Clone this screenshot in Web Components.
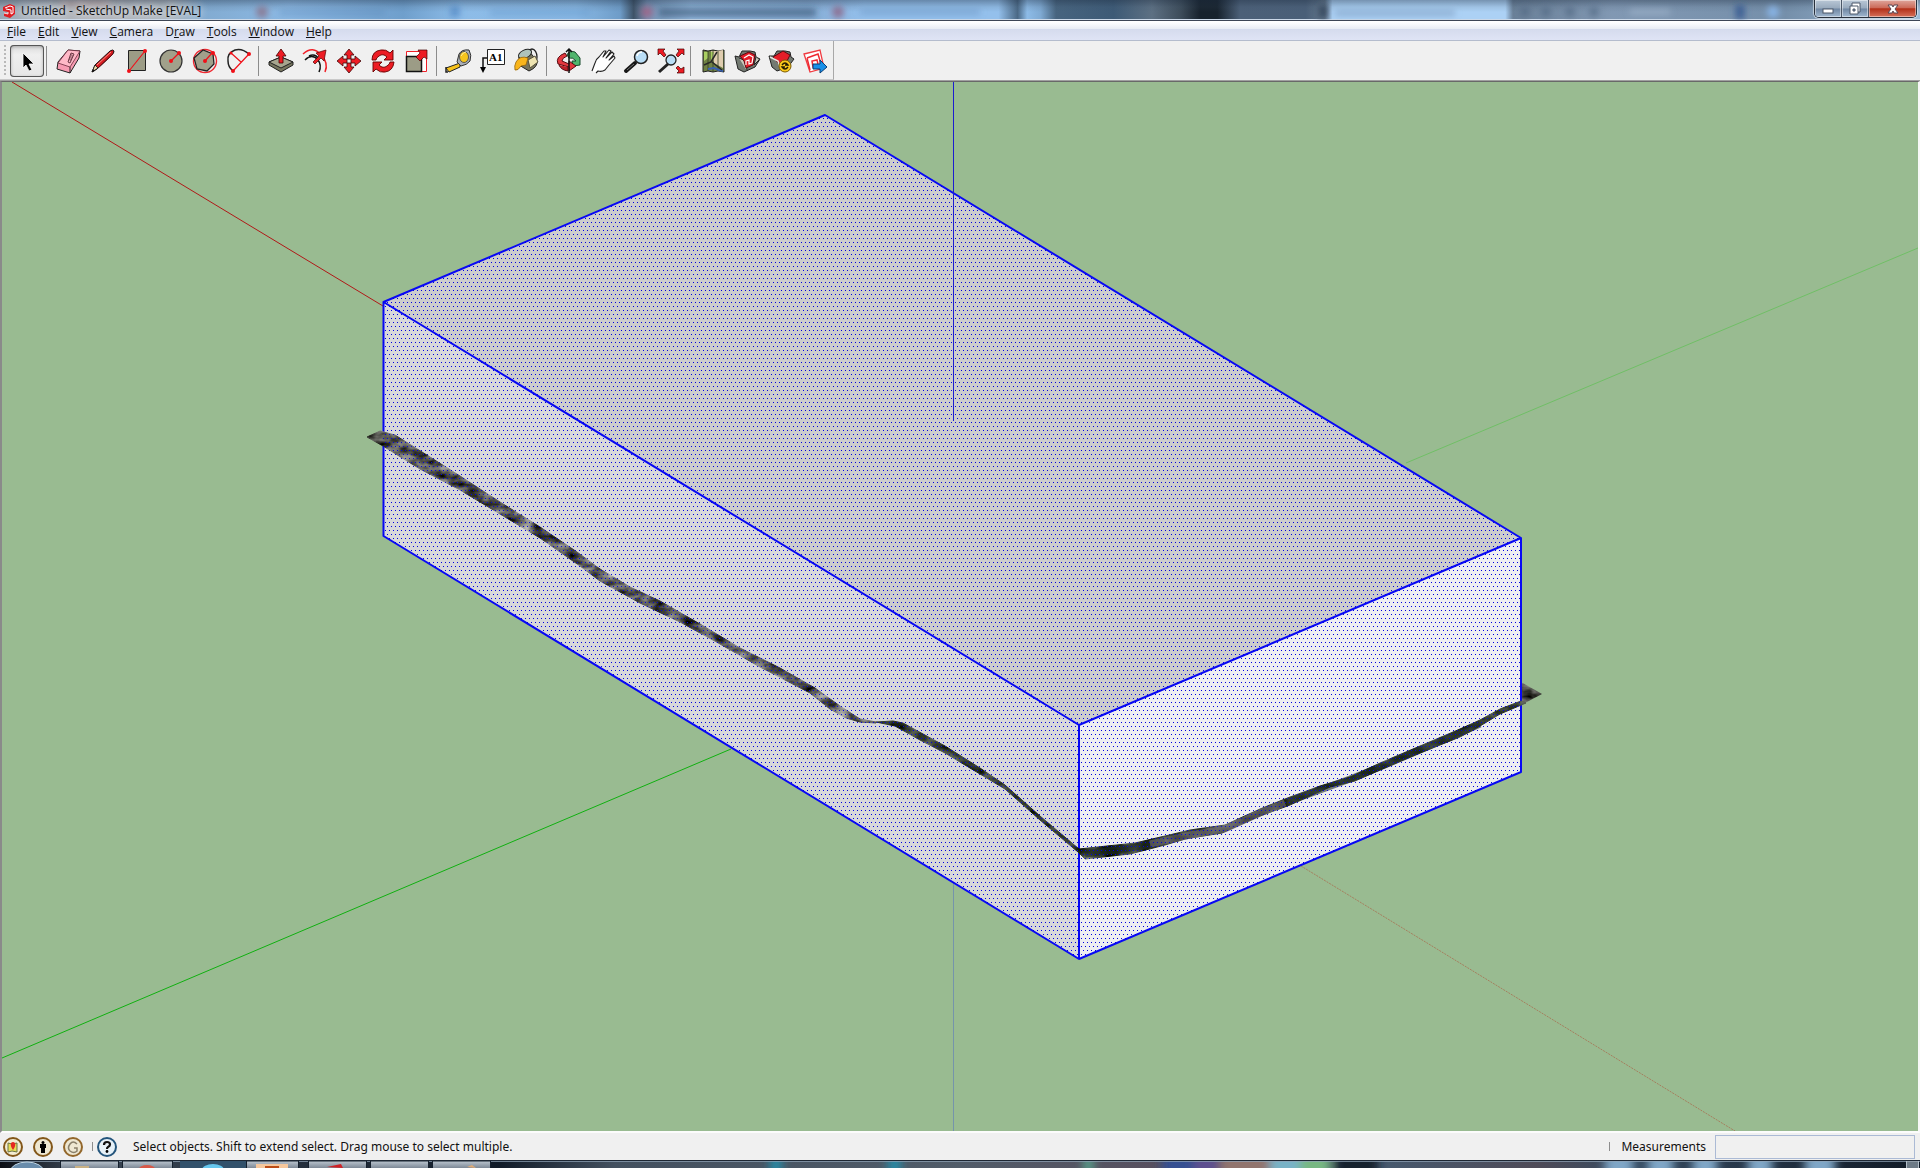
<!DOCTYPE html>
<html lang="en">
<head>
<meta charset="utf-8">
<title>Untitled - SketchUp Make [EVAL]</title>
<style>
html,body{height:100%;margin:0}
body{font-family:"Open Sans","Noto Sans",sans-serif;font-size:12px;color:#111;background:#f0f0f0;overflow:hidden}
</style>
</head>
<body>
<sketch-app></sketch-app>

<template id="t-app">
<style>
:host{display:flex;flex-direction:column;height:100vh}
model-view{flex:1;min-height:0}
</style>
<title-bar>Untitled - SketchUp Make [EVAL]</title-bar>
<menu-bar></menu-bar>
<tool-bar></tool-bar>
<model-view></model-view>
<status-bar>Select objects. Shift to extend select. Drag mouse to select multiple.</status-bar>
<task-strip></task-strip>
</template>

<template id="t-title">
<style>
:host{display:flex;position:relative;height:20px;overflow:hidden;border-bottom:1px solid #3d4655;box-shadow:inset 0 -1px #cbd8e8;
background:linear-gradient(90deg,#9aa8b5 0,#aeb5bd 2%,#b1b2b7 5%,#aab4bd 9%,#82abd1 10.6%,#8bb8e3 15%,#6f9fcc 21%,#8dbce8 24%,#89b9e5 30%,#6e9cc8 32.3%,#3e5267 33%,#7292b4 33.7%,#93b8de 36%,#86acd4 42%,#94c0ec 45%,#94c0ec 52%,#4a6885 53%,#8dbbe7 53.5%,#7faad3 54.2%,#47647f 55%,#3d5a76 58%,#5d7083 60%,#3d4c5a 61.5%,#17222d 62.5%,#17222d 63.4%,#4c6078 64.6%,#4a5f78 68%,#64788d 69%,#acd1f5 69.4%,#acd1f5 78.4%,#6a8098 78.8%,#8198b3 84%,#758faa 93%,#9dbbd8 100%)}
:host::before{content:"";position:absolute;inset:0;background:linear-gradient(rgba(30,45,65,.38),rgba(60,80,100,.12) 35%,rgba(255,255,255,0) 60%)}
.ghost{position:absolute;inset:0;width:100%;height:100%}
.name{position:relative;display:flex;align-items:center;gap:5px;padding-left:2px;height:21px}
.name svg{width:14px;height:16px}
.name span{white-space:nowrap;text-shadow:0 0 6px #e4eaf0,0 0 8px #dce2ea}
.controls{position:relative;display:flex;margin-left:auto;margin-right:3px;height:17px;border:1px solid #28303c;border-top:0;border-radius:0 0 5px 5px;overflow:hidden;box-shadow:0 0 1px 1px rgba(255,255,255,.55)}
button{border:0;padding:0;margin:0;width:27px;height:17px;display:flex;align-items:center;justify-content:center;background:linear-gradient(#b9c7d6,#98aabd 48%,#6f86a2 52%,#a1b8d0);border-right:1px solid #4b5767;box-shadow:inset 0 0 0 1px rgba(255,255,255,.45)}
button.close{width:47px;border-right:0;background:linear-gradient(#dfa69c,#cc6b5a 45%,#b33019 52%,#d6715b)}
</style>
<svg class="ghost" preserveAspectRatio="none" viewBox="0 0 1920 20" aria-hidden="true">
<defs><filter id="b"><feGaussianBlur stdDeviation="3"/></filter></defs>
<g filter="url(#b)">
<circle cx="262" cy="12" r="6" fill="#8a6479" opacity=".7"/><rect x="280" y="9" width="105" height="7" fill="#567fae" opacity=".3"/>
<rect x="60" y="2" width="50" height="4" fill="#b08a86" opacity=".6"/>
<rect x="450" y="6" width="10" height="11" fill="#3a70b4" opacity=".5"/><rect x="490" y="9" width="100" height="7" fill="#5c8dc0" opacity=".35"/>
<circle cx="647" cy="12" r="6" fill="#a65d80" opacity=".8"/><rect x="659" y="9" width="157" height="7" fill="#29405d" opacity=".6"/><circle cx="838" cy="12" r="6" fill="#8c5272" opacity=".7"/>
<rect x="860" y="9" width="120" height="6" fill="#658fbb" opacity=".5"/>
<rect x="1319" y="5" width="8" height="13" fill="#34475d"/><rect x="1335" y="10" width="120" height="6" fill="#7898bb" opacity=".6"/>
<g fill="#4f6781" opacity=".7"><circle cx="1525" cy="12" r="5"/><circle cx="1546" cy="12" r="5"/><circle cx="1570" cy="12" r="5"/><circle cx="1594" cy="12" r="5"/><rect x="1735" y="5" width="10" height="14" fill="#2c4f8c"/></g>
<rect x="1630" y="9" width="40" height="6" fill="#a9bdd3" opacity=".5"/><circle cx="1773" cy="12" r="6" fill="#88b4e6"/>
</g></svg>
<div class="name">
<svg viewBox="0 0 14 16"><path d="M1 4 8 1l5 2v8l-5 4-6-2v-3l4 1V9L1 8z" fill="#df1e24"/><path d="M3 5l5-2 3 1v6l-2 1V7L4 6" fill="none" stroke="#fff"/><path d="M2 10l4 1V9" fill="none" stroke="#ffd6d6"/></svg>
<span><slot></slot></span></div>
<div class="controls">
<button aria-label="Minimize"><svg width="14" height="14"><rect x="2" y="7" width="10" height="4" fill="#fff" stroke="#4d586a"/></svg></button>
<button aria-label="Restore"><svg width="14" height="14"><path d="M4 1h8v9H4z" fill="#fff" stroke="#4d586a"/><path d="M2 4h8v8H2z" fill="#fff" stroke="#4d586a"/><path d="M5 7h2v2H5z" fill="#7d91ab" stroke="#4d586a"/></svg></button>
<button class="close" aria-label="Close"><svg width="14" height="14"><path d="M2 3h4l1 2 1-2h4L9 7l3 4H8L7 9l-1 2H2l3-4z" fill="#fff" stroke="#5a4652"/></svg></button>
</div>
</template>

<template id="t-menu">
<style>
:host{display:flex;box-sizing:border-box;height:20px;border-top:1px solid #fff;border-bottom:1px solid #b4bccd;background:linear-gradient(#fff,#e8ecf4 7px,#d5dbed 7px,#dfe4f5)}
nav{display:flex;align-items:center;gap:12px;padding:2px 0 0 7px}
button{all:unset;font:inherit;line-height:16px}
</style>
<nav aria-label="Main menu"><button><u>F</u>ile</button><button><u>E</u>dit</button><button><u>V</u>iew</button><button><u>C</u>amera</button><button>D<u>r</u>aw</button><button><u>T</u>ools</button><button><u>W</u>indow</button><button><u>H</u>elp</button></nav>
</template>

<template id="t-button">
<style>
:host{display:block;width:34px;height:32px}
button{display:block;box-sizing:border-box;width:100%;height:100%;border:0;padding:0;margin:0;background:none}
:host([pressed]) button{background:linear-gradient(#d9d9d9,#efefef 30%,#e6e6e6);border-radius:4px;box-shadow:inset 0 0 0 1px #565656,inset 0 1px 3px 1px #aaa}
::slotted(svg){display:block;width:34px;height:32px}
</style>
<button><slot></slot></button>
</template>

<template id="t-tools">
<style>
:host{display:flex;background:#f0f0f0;border-bottom:1px solid #a0a0a0}
.band{display:flex;align-items:center;box-sizing:border-box;height:39px;padding:2px 1px 0 4px;border-right:1px solid #a8a8a8;border-bottom:1px solid #c9c9c9}
.grip{width:2px;height:32px;margin-right:4px;background:repeating-linear-gradient(#b9b9b9 0 2px,transparent 2px 4px)}
hr{width:1px;height:30px;margin:0 5px 0 2px;border:0;background:#8c8c8c}
</style>
<div class="band" role="toolbar" aria-label="Getting started"><span class="grip"></span>
<tool-button pressed label="Select"><svg viewBox="0 0 34 32"><path d="M13 8v15l3-3 3 6 3-1-3-6h5z" fill="#000" stroke="#fff" stroke-width=".8"/></svg></tool-button><hr>
<tool-button label="Eraser"><svg viewBox="0 0 34 32"><path d="M16 5 28 6l-1 7-9 15-13-4 1-7z" fill="#f79bb2" stroke="#222"/><path d="M6 18l12 4L28 6 16 5z" fill="#ffb9c7" stroke="#6b2a3c" stroke-width=".8"/><path d="M18 22v6" stroke="#222"/><path d="M16 17l3-9 3 1-4 9z" fill="none" stroke="#5b2a37" stroke-width=".9"/><path d="M17 15l3-6M18 16l3-6" stroke="#5b2a37" stroke-width=".6"/></svg></tool-button>
<tool-button label="Line"><svg viewBox="0 0 34 32"><path d="M6 27l3-7L24 6q3-2 4 0 0 2-2 4L11 24z" fill="#d51b20" stroke="#1c1010"/><path d="M6 27l3-7 3 3z" fill="#efd9a8" stroke="#111" stroke-width=".8"/><path d="M6 27l1-3 2 2z" fill="#111"/><path d="M11 20 25 7" stroke="#ff8c80"/><path d="M12 23 27 9" stroke="#701014"/></svg></tool-button>
<tool-button label="Rectangle"><svg viewBox="0 0 34 32"><path d="M8.500 5.500h17v20h-17z" fill="#9c9c86" stroke="#222"/><path d="M9 26 25 6" stroke="#f01018" stroke-width="1.200"/><circle cx="9" cy="26" r="2" fill="#f01018"/><circle cx="25" cy="6" r="2" fill="#f01018"/></svg></tool-button>
<tool-button label="Circle"><svg viewBox="0 0 34 32"><circle cx="17" cy="16" r="11" fill="#a1a18b" stroke="#333" stroke-width="1.200"/><path d="M17 16l8-8" stroke="#f01018" stroke-width="1.200"/><circle cx="17" cy="16" r="2" fill="#f01018"/><circle cx="25" cy="8" r="2" fill="#f01018"/></svg></tool-button>
<tool-button label="Polygon"><svg viewBox="0 0 34 32"><circle cx="17" cy="16" r="11.500" fill="none" stroke="#ef2830" stroke-width="1.400"/><path d="M6 13 15 5l10 4 1 10-7 7-10-2z" fill="#a1a18b" stroke="#222" stroke-width="1.300"/><path d="M17 16l7-8" stroke="#f01018" stroke-width="1.200"/><circle cx="17" cy="16" r="2" fill="#f01018"/><circle cx="25" cy="8" r="2" fill="#f01018"/></svg></tool-button>
<tool-button label="Arc"><svg viewBox="0 0 34 32"><path d="M27 9Q20 3 13 5 5 8 6 16q0 6 5 10" fill="none" stroke="#222" stroke-width="1.500"/><path d="M11 26 27 9M9 8l10 9" stroke="#f01018" stroke-width="1.200" fill="none"/><g fill="#f01018"><circle cx="11" cy="26" r="2"/><circle cx="27" cy="9" r="2"/><circle cx="9" cy="8" r="1.500"/></g></svg></tool-button><hr>
<tool-button label="Push/Pull"><svg viewBox="0 0 34 32"><path d="M5 17l12-5 12 5v3l-12 7-12-7z" fill="#77765f" stroke="#222"/><path d="M5 17l12-5 12 5-12 6z" fill="#a6a58e" stroke="#222"/><path d="M15 18v-7h-3l5-7 5 7h-3v7z" fill="#ed1c24" stroke="#400" stroke-width=".8"/></svg></tool-button>
<tool-button label="Follow Me"><svg viewBox="0 0 34 32"><path d="M5 9q10-9 18 1 8 8 4 17" fill="none" stroke="#f02028" stroke-width="1.500"/><path d="M7 15q7-7 13 0 4 5 1 12M11 11q6-3 10 3" fill="none" stroke="#111" stroke-width="1.500"/><path d="M15 17l6-6-3-3 10-3-2 11-3-3-6 6z" fill="#ed1c24" stroke="#500" stroke-width=".7"/></svg></tool-button>
<tool-button label="Move"><svg viewBox="0 0 34 32"><path d="M17 4l5 6h-3v4h-4v-4h-3zM17 28l5-6h-3v-4h-4v4h-3zM5 16l6-5v3h4v4h-4v3zM29 16l-6-5v3h-4v4h4v3z" fill="#ed1c24" stroke="#3d0808" stroke-width=".8"/></svg></tool-button>
<tool-button label="Rotate"><svg viewBox="0 0 34 32"><path d="M6 15q0-9 9-10 5-1 9 3l3-3v10H18l3-3q-4-4-8-1-3 2-3 4zM28 17q-1 9-9 10-5 1-9-3l-3 3V17h9l-3 3q4 4 8 1 3-2 3-4z" fill="#ed1c24" stroke="#600" stroke-width=".9"/></svg></tool-button>
<tool-button label="Scale"><svg viewBox="0 0 34 32"><path d="M6.500 6.500h20v20h-20z" fill="#fff" stroke="#f02028"/><path d="M6.500 11.500h15v15h-15z" fill="#9c9c86" stroke="#111" stroke-width="1.500"/><path d="M16 12l4-4-2-3 9 0v9l-3-2-4 4z" fill="#ed1c24" stroke="#400" stroke-width=".7"/></svg></tool-button><hr>
<tool-button label="Tape Measure"><svg viewBox="0 0 34 32"><path d="M4 23l14-5v4L7 27z" fill="#f7c21a" stroke="#222"/><path d="M4 22v5l2 0" fill="none" stroke="#222" stroke-width="1.500"/><path d="M17 9q3-5 10-4 3 5 1 11-3 4-9 5l-4-4z" fill="#a8aeb6" stroke="#333"/><ellipse cx="22" cy="12" rx="4.500" ry="5.500" fill="#f5c51d" stroke="#555"/><path d="M19 11q2-4 5-4" stroke="#fff0a0" fill="none"/></svg></tool-button>
<tool-button label="Text"><svg viewBox="0 0 34 32"><path d="M11.500 4.500h17v15h-17z" fill="#fff" stroke="#222"/><path d="M11 13H7v11" fill="none" stroke="#111" stroke-width="1.500"/><path d="M4 22h6l-3 6z"/><text x="13" y="16" font-family="Liberation Serif" font-weight="bold" font-size="11">A1</text></svg></tool-button>
<tool-button label="Paint Bucket"><svg viewBox="0 0 34 32"><ellipse cx="22" cy="12" rx="5" ry="8" fill="none" stroke="#222" stroke-width="1.300"/><path d="M9 12 19 6l8 10q1 6-8 10L9 20z" fill="#77745b" stroke="#222"/><path d="M18 15l7-4 3 6-8 6z" fill="#eee4b1" stroke="#55513c"/><ellipse cx="15" cy="9" rx="7" ry="4" transform="rotate(-25 15 9)" fill="#aec3ba" stroke="#222"/><path d="M18 13q-8-3-12 4-2 4-1 8 3 1 6-4l5-1z" fill="#f9b51b" stroke="#94640b" stroke-width=".8"/></svg></tool-button><hr>
<tool-button label="Orbit"><svg viewBox="0 0 34 32"><path d="M15 10q2-5 8-3l5 6v7l-7 1-1-5 4 0q-3-4-7-3z" fill="#51b56d" stroke="#164b2a"/><path d="M13 8q-10 4-7 11l11 3v4l7-5-7-5v3l-7-3q0-3 5-5z" fill="#e4383e" stroke="#560b10"/><path d="M17 4v24M14 7l3-3 3 3" fill="none" stroke="#111" stroke-width="1.500"/><path d="M7 20q2 5 9 6v-4" fill="#bd2229" stroke="#560b10"/></svg></tool-button>
<tool-button label="Pan"><svg viewBox="0 0 34 32"><path d="M6 26l3-8q1-4 4-6l5-6 2 0-3 6 6-7 2 1-5 7 6-6 2 2-5 6 5-4 1 2-6 7-4 5q-3 2-7 1l-2 2" fill="#fff" stroke="#222" stroke-width="1.100" stroke-linejoin="round"/></svg></tool-button>
<tool-button label="Zoom"><svg viewBox="0 0 34 32"><path d="M6 26l9-8" stroke="#161616" stroke-width="4" stroke-linecap="round"/><path d="M7 25l7-6" stroke="#777"/><circle cx="21" cy="12" r="6.500" fill="#b9def6" stroke="#222" stroke-width="1.500"/><path d="M17 11q1-4 5-4" fill="none" stroke="#fff" stroke-width="1.500"/></svg></tool-button>
<tool-button label="Zoom Extents"><svg viewBox="0 0 34 32"><path d="M5 27l9-8" stroke="#222" stroke-width="3"/><circle cx="17" cy="15" r="5" fill="#b9def6" stroke="#222" stroke-width="1.300"/><path d="M4 4h7l-2 2 3 4-2 2-4-4-2 2zM30 4h-7l2 2-3 4 2 2 4-4 2 2zM30 28h-7l2-2-3-3 2-2 3 3 3-2z" fill="#ed1c24" stroke="#400" stroke-width=".7"/></svg></tool-button><hr>
<tool-button label="Add Location"><svg viewBox="0 0 34 32"><path d="M7 5l5 1 5-1 5 1 6-1v22l-6-1-5 1-5-1-5 1z" fill="#6f8145" stroke="#222"/><path d="M15 6h6l6-1v18l-9-5z" fill="#dfcdb0"/><path d="M8 7l4 0v6l-4 3zM15 7l3 0-3 9z" fill="#a9cf62"/><path d="M22 6v20M17 5v22M12 6v20" stroke="#343e24" stroke-width=".8"/><path d="M12 24l6-1 5 2 4 1" fill="none" stroke="#3861b4" stroke-width="2"/><path d="M8 20l7-3 6-10M16 17l10 8" fill="none" stroke="#282828" stroke-width="1.500"/></svg></tool-button>
<tool-button label="Get Models"><svg viewBox="0 0 34 32"><path d="M5 11l4 1 3-6 8 0 5 1 1 5 4 2-5 8-11 5-6-3z" fill="#737a72" stroke="#222"/><path d="M9 13l7 3 1 10M26 12l-2 8 5-5" fill="#c9cabd" stroke="#222"/><path d="M10 11l9-4 6 3-2 10-7 3-2-7z" fill="#e51d28" stroke="#5d0810"/><path d="M14 13l5-3 4 2-1 6-3 1v-4l-3 1v4" fill="none" stroke="#fff" stroke-width="1.200"/></svg></tool-button>
<tool-button label="Share Model"><svg viewBox="0 0 34 32"><path d="M5 11l5 0 3-5 8 0 5 1 1 5 3 2-6 8-11 4-5-4z" fill="#737a72" stroke="#222"/><path d="M9 12l10-6 7 4-4 8-7 1z" fill="#e51d28" stroke="#5d0810"/><path d="M6 12l8 4 3 9" stroke="#e6e6df" fill="none" stroke-width="1.500"/><circle cx="21" cy="21" r="6" fill="#f9c91c" stroke="#7c5b00"/><path d="M18 20q3-4 6 0h-3M24 22q-3 4-6 0h3" stroke="#221b00" fill="none" stroke-width="1.300"/></svg></tool-button>
<tool-button label="Send to LayOut"><svg viewBox="0 0 34 32"><path d="M6 9l16-4 4 18-14 4z" fill="#fff" stroke="#f03a40" stroke-width="1.300"/><path d="M9 13l11-4 3 10-8 3-1-6 5-1 1 4M9 13l3 12" fill="none" stroke="#ee2830" stroke-width="1.500"/><path d="M15 19h7v-4l7 7-7 6v-4h-7z" fill="#1990e8" stroke="#0b3c73"/></svg></tool-button>
</div>
</template>

<template id="t-view">
<style>
:host{display:block;box-sizing:border-box;border:solid;border-width:1px 2px 2px;border-color:#696969 #f8f8f8 #fcfcfc #8a8a8a;background:#99bb91}
svg{display:block;width:100%;height:100%}
.edge{fill:none;stroke:#0808f5;stroke-width:2;stroke-linejoin:round}
</style>
<svg viewBox="2 82 1916 1049" preserveAspectRatio="xMidYMid slice" role="img" aria-label="Selected box with terrain section">
<defs>
<pattern id="dots" width="4" height="8" patternUnits="userSpaceOnUse"><rect x="1" y="2" width="1" height="1" fill="#0000e0"/><rect x="3" y="6" width="1" height="1" fill="#0000e0"/></pattern>
<filter id="rock" x="-.05" y="-.05" width="1.100" height="1.100" color-interpolation-filters="sRGB"><feTurbulence type="fractalNoise" baseFrequency=".06 .12" numOctaves="3" seed="9"/><feColorMatrix values="1 0 0 0 -.15  1 0 0 0 -.15  1 0 0 0 -.17  0 0 0 0 1"/><feComposite in2="SourceGraphic" operator="in"/></filter>
<filter id="moss" x="-.05" y="-.05" width="1.100" height="1.100" color-interpolation-filters="sRGB"><feTurbulence type="fractalNoise" baseFrequency=".05 .09" numOctaves="3" seed="4"/><feColorMatrix values=".7 0 0 0 -.15  .7 0 0 0 -.12  .7 0 0 0 -.17  0 0 0 0 1"/><feComposite in2="SourceGraphic" operator="in"/></filter>
</defs>
<path d="M12 82 383 306" stroke="#b01818"/>
<path d="M2 1058 731 749" stroke="#10b010"/>
<path d="M1406 463 1918 248" stroke="#70bf66"/>
<path d="M1301 866 1735 1131" stroke="#a5805f" stroke-dasharray="2 1"/>
<path d="M953.500 883V1131" stroke="#7594ab"/>
<path d="M383 302 825 115 1521 538 1079 725z" fill="#cdcdcd"/>
<path d="M383 302 1079 725V959L383 536z" fill="#d8d8da"/>
<path d="M1079 725 1521 538V772L1079 959z" fill="#eeeef1"/>
<path d="M1521 682 1542 694 1521 705z" fill="#777" filter="url(#rock)"/>
<path class="edge" d="M383.500 302 825 115 1521 538V772L1079 959 383.500 536zM383.500 302 1079 725 1521 538M1079 725V959"/>
<path filter="url(#rock)" stroke="#000" d="M367 437 380 431 395 435 430 457 460 476 500 502 540 527 577 552 600 569 630 587 660 601 700 624 740 648 780 668 815 688 840 706 860 719 876 722 876 723 860 722 846 718 830 709 810 693 760 667 720 644 680 622 640 603 600 581 580 566 540 538 500 514 460 490 420 469 383 446z"/>
<path filter="url(#moss)" stroke="#000" d="M876 722 893 721 903 723 945 746 980 768 1005 785 1040 816 1079 849 1135 843 1165 836 1190 830 1225 825 1260 809 1290 797 1320 786 1350 777 1380 763 1420 746 1460 729 1480 720 1500 709 1521 701 1526 703 1500 714 1475 729 1460 737 1420 753 1380 770 1355 781 1330 787 1290 805 1260 816 1222 833 1185 839 1165 845 1130 854 1085 859 1078 852 1040 820 1005 789 980 774 945 753 920 740 895 726z"/>
<path d="M1085 854 1130 848 1165 841M1290 801 1350 779 1380 767 1420 750 1460 733 1480 724" fill="none" stroke="#202b26" stroke-width="7" opacity=".6"/>
<path d="M1150 844 1190 835 1225 829 1260 813 1285 803" fill="none" stroke="#77717a" stroke-width="7" opacity=".6"/>
<path d="M383 302 825 115 1521 538V772L1079 959 383 536z" fill="url(#dots)"/>
<path d="M953.500 82V421" stroke="#1c1cd0"/>
</svg>
</template>

<template id="t-status">
<style>
:host{display:flex;align-items:center;box-sizing:border-box;height:27px;padding:0 5px 0 3px;background:#f0f0f0;white-space:nowrap;font-family:"Noto Sans","Open Sans",sans-serif}
.icons{display:flex;align-items:center;gap:10px}
button{border:0;padding:0;margin:0;background:none;width:20px;height:20px}
button svg{display:block;width:20px;height:20px}
i{width:1px;height:9px;background:#8d8d8d}
.icons i{margin:0 -6px 0 -1px}
.msg{margin-left:16px;flex:1}
label{margin:0 9px 0 11px}
input{box-sizing:border-box;width:200px;height:24px;border:1px solid #abbad5;background:#f0f0f0;font:inherit}
</style>
<div class="icons">
<button aria-label="Geo-location"><svg viewBox="0 0 20 20"><circle cx="10" cy="10" r="9" fill="#f3ecd2" stroke="#835719" stroke-width="2"/><path d="M5 6l4 1 5-1v9l-5-1-4 1z" fill="#e6dc55" stroke="#6b7448"/><path d="M10 13Q7 9 8 6q2-2 4 0 1 3-2 7z" fill="#e52822"/></svg></button>
<button aria-label="Credits"><svg viewBox="0 0 20 20"><circle cx="10" cy="10" r="9" fill="#eee7d1" stroke="#835719" stroke-width="2"/><circle cx="10" cy="5.500" r="1.500"/><path d="M7 7h6v4h-1v5H8v-5H7z"/></svg></button>
<button aria-label="Sign in"><svg viewBox="0 0 20 20"><circle cx="10" cy="10" r="9" fill="#eee7d1" stroke="#93672b" stroke-width="2"/><path d="M14 7q-4-4-7 0-3 4 0 7 4 3 7 0v-3h-3" fill="none" stroke="#8a806a" stroke-width="1.500"/></svg></button>
<i></i>
<button aria-label="Help"><svg viewBox="0 0 20 20"><circle cx="10" cy="10" r="9" fill="#e6f1f8" stroke="#24557c" stroke-width="2"/><path d="M7 8q0-3 3-3t3 2.500q0 1.500-2 2.500-1 .5-1 2" fill="none" stroke="#101010" stroke-width="2.200"/><circle cx="10" cy="14.500" r="1.400"/></svg></button>
</div>
<span class="msg"><slot></slot></span><i></i><label for="m">Measurements</label><input id="m" type="text">
</template>

<template id="t-task">
<style>
:host{display:block;box-sizing:border-box;height:8px;border-top:1px solid #1d2632}
svg{display:block;width:100%;height:7px}
</style>
<svg viewBox="0 0 1920 7" preserveAspectRatio="none" aria-hidden="true">
<defs><linearGradient id="g"><stop offset="0" stop-color="#0b0e14"/><stop offset=".04" stop-color="#3b4654"/><stop offset=".26" stop-color="#111b28"/><stop offset=".32" stop-color="#43505f"/><stop offset=".5" stop-color="#515c69"/><stop offset=".6" stop-color="#57505f"/><stop offset=".72" stop-color="#46596e"/><stop offset=".8" stop-color="#4f4b58"/><stop offset=".85" stop-color="#354a60"/><stop offset="1" stop-color="#101925"/></linearGradient>
<linearGradient id="h" x2="0" y2="1"><stop offset="0" stop-color="#bcc6d0"/><stop offset="1" stop-color="#74808e"/></linearGradient><filter id="b"><feGaussianBlur stdDeviation="5 0"/></filter></defs>
<path fill="url(#g)" d="M0 0h1920v7H0z"/>
<g filter="url(#b)"><path d="M770 0h12v7h-12zM888 0h13v7h-13z" fill="#268aa6"/><path d="M1084 0h9v7h-9z" fill="#56a58d"/><path d="M1162 0h32v7h-32z" fill="#344f91"/><path d="M1194 0h24v7h-24z" fill="#5d508f"/><path d="M1220 0h50v7h-50z" fill="#91756e"/><path d="M1270 0h30v7h-30z" fill="#78b2c6"/><path d="M1300 0h30v7h-30z" fill="#77b782"/><path d="M1335 0h43v7h-43z" fill="#18232e"/><path d="M1605 0h28v7h-28zM1648 0h25v7h-25zM1693 0h24v7h-24zM1748 0h24v7h-24zM1805 0h30v7h-30z" fill="#7fa6c6"/></g>
<path d="M0 .5h1920" stroke="#91a5b9" opacity=".7"/>
<ellipse cx="27" cy="11" rx="17" ry="10" fill="#698cab" stroke="#bdd3e2"/>
<g fill="url(#h)" stroke="#15202d"><path d="M60.500 0h58v8h-58zM122.500 0h50v8h-50zM246.500 0h52v8h-52zM308.500 0h58v8h-58zM370.500 0h58v8h-58zM432.500 0h58v8h-58z"/></g>
<path d="M180 0h66v7h-66z" fill="#32516b"/><ellipse cx="213" cy="9" rx="11" ry="6" fill="#66c7ee"/><path d="M256 3h32v4h-32z" fill="#f5c79c"/><path d="M265 5h14v2h-14z" fill="#bb4c17"/><ellipse cx="147" cy="8" rx="8" ry="4" fill="#d75848"/><path d="M75 5h14v2H75z" fill="#c9b184"/><path d="M327 6l14-3 2 4z" fill="#cf2025"/><path d="M467 6l5-2 4 3z" fill="#dfaa75"/>
<path d="M1906.500 0h12v8h-12z" fill="#6d7a86" stroke="#b3bec8"/>
</svg>
</template>

<script>
const define=(name,id)=>customElements.define(name,class extends HTMLElement{
  constructor(){super();this.attachShadow({mode:"open"}).append(document.getElementById(id).content.cloneNode(true));}
});
customElements.define("tool-button",class extends HTMLElement{
  constructor(){super();this.attachShadow({mode:"open"}).append(document.getElementById("t-button").content.cloneNode(true));}
  connectedCallback(){
    const b=this.shadowRoot.querySelector("button");
    b.setAttribute("aria-label",this.getAttribute("label"));
    b.setAttribute("aria-pressed",this.hasAttribute("pressed"));
  }
});
define("title-bar","t-title");
define("menu-bar","t-menu");
define("tool-bar","t-tools");
define("model-view","t-view");
define("status-bar","t-status");
define("task-strip","t-task");
define("sketch-app","t-app");
</script>
</body>
</html>
